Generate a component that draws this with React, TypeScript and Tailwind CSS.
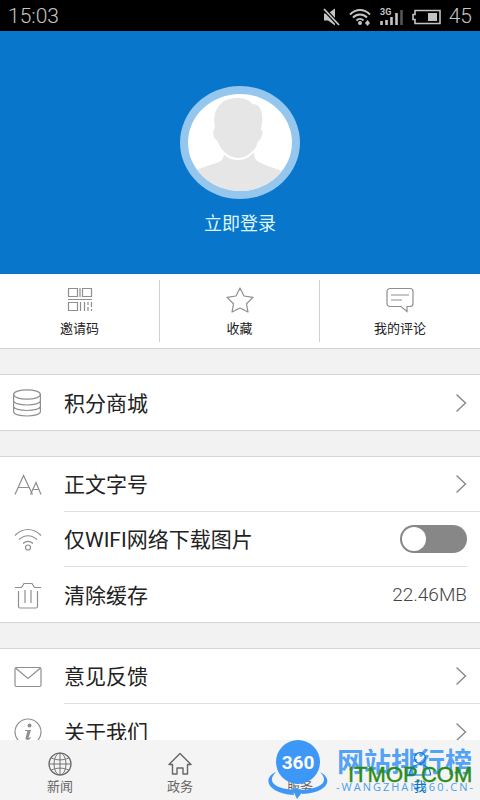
import type { ReactNode } from "react";

function Svg({ w, h, box, children, className = "" }: { w: number; h: number; box?: string; children: ReactNode; className?: string }) {
  return (
    <svg
      width={w}
      height={h}
      viewBox={box ?? `0 0 ${w} ${h}`}
      fill="none"
      stroke="currentColor"
      strokeWidth="1.2"
      className={`shrink-0 ${className}`}
      aria-hidden="true"
    >
      {children}
    </svg>
  );
}

function StatusBar() {
  return (
    <header className="flex h-[31px] shrink-0 items-center justify-between bg-black px-2 pt-[2px] text-[21px] font-light text-[#c4c4c4]">
      <span>15:03</span>
      <div className="flex items-center">
        <Svg w={18} h={18}>
          <path d="M1 5.500h4l7-5v17l-7-5H1z" fill="currentColor" stroke="none" />
          <path d="M1 1l15 16" stroke="#000" strokeWidth="4" />
          <path d="M1 1l15 16" strokeWidth="1.8" />
        </Svg>
        <Svg w={23} h={18} className="ml-2">
          <path d="M1 6.500C7 .5 15 .5 21 6.500M4 9.500c4-4 10-4 14 0M7.500 12.500c2-2 5-2 7 0" strokeWidth="2" />
          <circle cx="11" cy="15" r="2" fill="currentColor" stroke="none" />
          <path d="M16 15l2.500-3 2.500 3-2.500 3z" fill="currentColor" stroke="none" />
        </Svg>
        <Svg w={24} h={18} className="ml-2">
          <text x="0" y="7" fontSize="9" fontWeight="700" fill="currentColor" stroke="none">3G</text>
          <path d="M1.500 17v-4M6.500 17v-5M11.500 17V9M16.500 17V5" strokeWidth="2.600" />
          <path d="M21.500 17V2" strokeWidth="2.600" stroke="#555" />
        </Svg>
        <Svg w={29} h={16} className="ml-2">
          <path d="M3 1.500h25v13H3v-4H1v-5h2z" strokeWidth="1.600" />
          <path d="M16 4h9v8h-9z" fill="currentColor" stroke="none" />
        </Svg>
        <span className="ml-2">45</span>
      </div>
    </header>
  );
}

function Profile() {
  return (
    <section className="flex h-[243px] shrink-0 flex-col items-center bg-[#0877cb] pt-[55px]">
      <button type="button" className="flex flex-col items-center gap-[13px]">
        <svg width="120" height="113" viewBox="0 0 120 113" aria-hidden="true">
          <defs>
            <clipPath id="face">
              <ellipse cx="60" cy="56.500" rx="52" ry="48.500" />
            </clipPath>
          </defs>
          <ellipse cx="60" cy="56.500" rx="60" ry="56.500" fill="#94c6ee" />
          <ellipse cx="60" cy="56.500" rx="52" ry="48.500" fill="#fff" />
          <g clipPath="url(#face)" fill="#e6e6e6">
            <path d="M8 90c10-8 20-10 31-14 4-2 5-5 5-10h30c0 5 1 8 5 10 9 5 21 7 35 14v25H8z" />
            <path
              d="M34 42C30 21 42 11 57 11c9 0 13 2 16 6 10 0 12 13 9 26 3 2 1 10-3 13-2 8-11 17-21 17S40 65 37 56c-5-3-6-12-3-14z"
              stroke="#fff"
              strokeWidth="2"
            />
          </g>
        </svg>
        <span className="text-[18px] leading-6 text-[#dff6ff]">立即登录</span>
      </button>
    </section>
  );
}

const quick: { label: string; icon: ReactNode }[] = [
  {
    label: "邀请码",
    icon: (
      <Svg w={26} h={26}>
        <path d="M1.500 1.500h9v8h-9zM15.500 1.500h9v8h-9zM13 1v9M1 12.500h24M1.500 15.500h9v8h-9zM13.500 15v9M17.500 15v9M21 15v3M21 20v4M24.500 15v5M24.500 22v2" />
      </Svg>
    ),
  },
  {
    label: "收藏",
    icon: (
      <Svg w={28} h={26}>
        <path d="M14 1l4 8 9 1.400-6.500 6.400 1.500 8.200-8-4-8 4 1.500-8.200L1 10.400 10 9z" strokeLinejoin="round" />
      </Svg>
    ),
  },
  {
    label: "我的评论",
    icon: (
      <Svg w={28} h={26}>
        <path d="M4 1.500h20a3 3 0 0 1 3 3v12a3 3 0 0 1-3 3h-3v5l-6-5H4a3 3 0 0 1-3-3v-12a3 3 0 0 1 3-3zM5 8h18M5 13h11" />
      </Svg>
    ),
  },
];

function Chevron() {
  return (
    <Svg w={12} h={20} className="text-[#888]">
      <path d="M1.500 1.500L10.500 10l-9 8.500" strokeWidth="1.400" />
    </Svg>
  );
}

function Row({ icon, label, last, children }: { icon: ReactNode; label: string; last?: boolean; children?: ReactNode }) {
  return (
    <button type="button" className="flex h-[55px] w-full items-stretch text-left">
      <span className="flex w-16 shrink-0 items-center pl-[13px] text-[#8f8f8f]">{icon}</span>
      <span
        className={`flex flex-1 items-center justify-between pr-[13px] text-[21px] text-[#222] ${
          last ? "" : "border-b border-[#dedede]"
        }`}
      >
        <span className="pt-1">{label}</span>
        {children ?? <Chevron />}
      </span>
    </button>
  );
}

function Group({ children }: { children: ReactNode }) {
  return <section className="shrink-0 border-y border-[#d4d4d4] bg-white">{children}</section>;
}

function Settings() {
  return (
    <div className="flex flex-col gap-[25px] pt-[25px]">
      <Group>
        <Row
          last
          label="积分商城"
          icon={
            <Svg w={28} h={28}>
              <ellipse cx="14" cy="5.500" rx="13.400" ry="4.700" />
              <path d="M.6 5.500v17c0 6 26.800 6 26.800 0v-17M.6 11.500c0 6 26.800 6 26.800 0M.6 17c0 6 26.800 6 26.800 0" />
            </Svg>
          }
        />
      </Group>
      <Group>
        <Row
          label="正文字号"
          icon={
            <Svg w={28} h={22} className="ml-px">
              <path d="M1 20.500L9.500 1.500l9 19M4.500 13.500h11M16.500 20.500l5.500-12 5 12M18.500 15.500h7" />
            </Svg>
          }
        />
        <div className="flex h-[55px] items-stretch">
          <span className="flex w-16 shrink-0 items-center pl-[13px] text-[#8f8f8f]">
            <Svg w={28} h={24} className="ml-px">
              <path d="M1 7.500c7.500-8 18.500-8 26 0M5 11.500c5.500-5 12.500-5 18 0M9 15.500c3.500-3 6.500-3 10 0" />
              <circle cx="14" cy="19.500" r="2.500" />
            </Svg>
          </span>
          <div className="mr-[13px] flex flex-1 items-center border-b border-[#dedede]">
            <label htmlFor="wifi-only" className="flex-1 pt-1 text-[21px] text-[#222]">
              仅WIFI网络下载图片
            </label>
            <input
              id="wifi-only"
              type="checkbox"
              role="switch"
              className="h-7 w-[67px] shrink-0 appearance-none rounded-full bg-[#878787] p-[2px] before:block before:size-6 before:rounded-full before:bg-white checked:bg-[#0877cb] checked:before:ml-auto"
            />
          </div>
        </div>
        <Row
          last
          label="清除缓存"
          icon={
            <Svg w={28} h={28} className="ml-px">
              <path d="M1 6.500h6.500l2.500-4h8l2.500 4H27M4.500 10v15.500a1.500 1.500 0 0 0 1.500 1.500h16a1.500 1.500 0 0 0 1.500-1.500V10M11 9v13M17 9v13" />
            </Svg>
          }
        >
          <span className="pt-[2px] text-[19px] font-light text-[#444]">22.46MB</span>
        </Row>
      </Group>
      <Group>
        <Row
          label="意见反馈"
          icon={
            <Svg w={28} h={22} className="ml-px">
              <rect x="1" y="1.500" width="26" height="19" rx="1.500" />
              <path d="M1.500 2L14 12.500 26.500 2" />
            </Svg>
          }
        />
        <Row
          last
          label="关于我们"
          icon={
            <Svg w={28} h={28} className="ml-px">
              <circle cx="14" cy="14" r="13" />
              <circle cx="15.500" cy="7.500" r="2" fill="currentColor" stroke="none" />
              <path d="M11 12h6l-2.500 8 2.500-1-1 2c-2 1.500-5 1-4.500-1l2-7H11z" fill="currentColor" stroke="none" />
            </Svg>
          }
        />
      </Group>
    </div>
  );
}

const tabs: { label: string; active?: boolean; icon: ReactNode }[] = [
  {
    label: "新闻",
    icon: (
      <Svg w={24} h={24}>
        <circle cx="12" cy="12" r="11" />
        <ellipse cx="12" cy="12" rx="6" ry="11" strokeWidth="0.9" />
        <path d="M12 1v22M1 12h22M3.500 6c5 2.500 12 2.500 17 0M3.500 18c5-2.500 12-2.500 17 0" strokeWidth="0.9" />
      </Svg>
    ),
  },
  {
    label: "政务",
    icon: (
      <Svg w={24} h={24}>
        <path d="M1 12.500L12 1.500l11 11h-3.500V22H15v-6H9v6H4.500v-9.500z" strokeLinejoin="round" strokeWidth="1.4" />
      </Svg>
    ),
  },
  {
    label: "服务",
    icon: (
      <Svg w={24} h={24}>
        <rect x="3" y="3" width="18" height="18" rx="3" />
      </Svg>
    ),
  },
  {
    label: "我",
    active: true,
    icon: (
      <Svg w={24} h={24}>
        <circle cx="12" cy="6" r="5.400" />
        <path d="M1.500 23c0-14 21-14 21 0z" />
      </Svg>
    ),
  },
];

function TabBar() {
  return (
    <nav className="relative grid h-[60px] shrink-0 grid-cols-4 bg-[#f4f4f4]">
      {tabs.map((tab) => (
        <a
          key={tab.label}
          href="#"
          className={`flex flex-col items-center gap-px pt-3 text-[13px] leading-5 ${
            tab.active ? "z-10 text-[#0877cb]" : "text-[#666]"
          }`}
        >
          {tab.icon}
          <span>{tab.label}</span>
        </a>
      ))}
      <Watermark />
    </nav>
  );
}

function Watermark() {
  return (
    <div className="pointer-events-none absolute right-0 bottom-0 h-[60px] w-[212px]">
      <svg width="212" height="60" viewBox="268 740 212 60" aria-hidden="true">
        <circle cx="298" cy="762" r="22" fill="#3d97f7" />
        <path
          d="M276 772C262 778 267 793 294 795l-1-5C273 788 267 781 276 772zM320 772c14 7 8 21-18 22v-4c21-2 27-9 18-18z"
          fill="#3d97f7"
        />
        <path d="M292 788l12 2-7 9z" fill="#3d97f7" />
        <text
          x="298"
          y="769"
          textAnchor="middle"
          fontSize="19"
          fontWeight="700"
          fill="#fff"
          fontFamily="Roboto, sans-serif"
        >
          360
        </text>
        <text x="337" y="772" fontSize="27" fontWeight="700" fill="#3d97f7" fillOpacity="0.9">
          网站排行榜
        </text>
        <text x="348" y="782" fontSize="22" fill="#2b8c14" stroke="#2b8c14" strokeWidth="0.4" fontFamily="Liberation Sans, sans-serif">
          ITMOP.COM
        </text>
        <text x="336" y="791" fontSize="11" letterSpacing="2" fill="#4c9cf0" fontFamily="Open Sans, sans-serif">
          -WANGZHAN360.CN-
        </text>
      </svg>
    </div>
  );
}

export default function App() {
  return (
    <div className="flex h-screen flex-col bg-[#f2f2f2] font-[Roboto,'Noto_Sans_CJK_SC',sans-serif]">
      <StatusBar />
      <main className="min-h-0 flex-1 overflow-hidden">
        <Profile />
        <section className="grid h-[75px] grid-cols-3 border-b border-[#d4d4d4] bg-white py-[6px]">
          {quick.map((item, i) => (
            <button
              key={item.label}
              type="button"
              className={`flex flex-col items-center gap-[6px] pt-[7px] text-[#8f8f8f] ${
                i < 2 ? "border-r border-[#d0d0d0]" : ""
              }`}
            >
              {item.icon}
              <span className="text-[13px] leading-5 text-[#222]">{item.label}</span>
            </button>
          ))}
        </section>
        <Settings />
      </main>
      <TabBar />
    </div>
  );
}
